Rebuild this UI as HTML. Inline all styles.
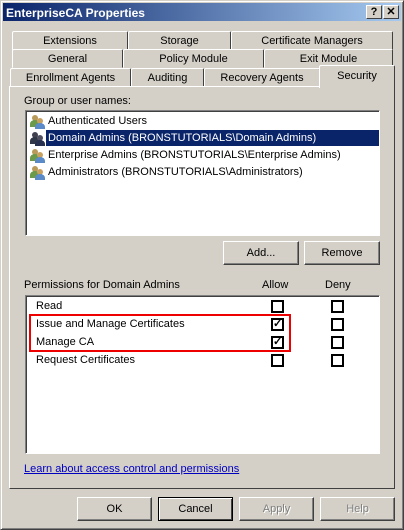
<!DOCTYPE html><html><head><style>
*{box-sizing:border-box}body{margin:0;width:404px;height:530px;background:#d4d0c8;font-family:Tahoma,"Liberation Sans",sans-serif;font-size:11px;color:#000;position:relative;overflow:hidden}
.a{position:absolute}
.win{left:0;top:0;width:404px;height:530px;border:1px solid #404040;border-top-color:#d4d0c8;border-left-color:#d4d0c8;box-shadow:inset 1px 1px #fff,inset -1px -1px #808080}
.title{left:3px;top:3px;width:398px;height:18px;background:linear-gradient(90deg,#0a246a,#a6caf0);color:#fff;font-weight:bold;font-size:12px;padding:3px 3px}
.tb{top:5px;width:16px;height:14px;background:#d4d0c8;border:1px solid;border-color:#fff #404040 #404040 #fff;font-weight:bold;font-size:11px;text-align:center;line-height:12px}
.tab{height:19px;border:1px solid;border-color:#fff #404040 transparent #fff;border-radius:2px 2px 0 0;text-align:center;line-height:19px;background:#d4d0c8}
.panel{left:9px;top:86px;width:386px;height:403px;border:1px solid;border-color:#fff #404040 #404040 #fff}
.box{background:#fff;border:1px solid;border-color:#808080 #fff #fff #808080;box-shadow:inset 1px 1px #404040}
.btn{height:24px;border:1px solid;border-color:#fff #404040 #404040 #fff;box-shadow:inset -1px -1px #808080;text-align:center;line-height:23px}
.cb{width:13px;height:13px;border:2px solid #000;background:#fff;font-size:11px;line-height:9px;text-align:center;font-weight:bold}
</style></head><body>
<div class="a win"></div>
<div class="a title">EnterpriseCA Properties</div>
<div class="a tb" style="left:366px">?</div><div class="a tb" style="left:383px">✕</div>
<div class="a tab" style="left:12px;top:31px;width:116px">Extensions</div>
<div class="a tab" style="left:128px;top:31px;width:103px">Storage</div>
<div class="a tab" style="left:231px;top:31px;width:162px">Certificate Managers</div>
<div class="a tab" style="left:12px;top:49px;width:111px">General</div>
<div class="a tab" style="left:123px;top:49px;width:141px">Policy Module</div>
<div class="a tab" style="left:264px;top:49px;width:129px">Exit Module</div>
<div class="a tab" style="left:10px;top:68px;width:121px">Enrollment Agents</div>
<div class="a tab" style="left:131px;top:68px;width:73px">Auditing</div>
<div class="a tab" style="left:204px;top:68px;width:116px">Recovery Agents</div>
<div class="a panel"></div>
<div class="a tab" style="left:319px;top:65px;width:76px;height:23px;border-bottom:none;line-height:20px;z-index:2">Security</div>
<div class="a" style="left:24px;top:95px">Group or user names:</div>
<div class="a box" style="left:25px;top:110px;width:355px;height:126px"></div>
<div class="a" style="left:46px;top:130px;width:333px;height:16px;background:#0a246a"></div>
<svg class="a" style="left:29px;top:114px" width="18" height="70">
<g id="u"><circle cx="6" cy="4" r="3" fill="#b89a5a"/><path d="M1 13v-3a5 4 0 0 1 10 0v3z" fill="#6a9a4a"/><circle cx="11" cy="7" r="3" fill="#c8a060"/><path d="M6 15v-2a5 4 0 0 1 10 0v2z" fill="#5a8ac8"/></g>
<g transform="translate(0,17)"><circle cx="6" cy="4" r="3" fill="#404050"/><path d="M1 13v-3a5 4 0 0 1 10 0v3z" fill="#303848"/><circle cx="11" cy="7" r="3" fill="#505060"/><path d="M6 15v-2a5 4 0 0 1 10 0v2z" fill="#283050"/></g>
<use href="#u" y="34"/><use href="#u" y="51"/></svg>
<div class="a" style="left:48px;top:115px">Authenticated Users</div>
<div class="a" style="left:48px;top:132px;color:#fff">Domain Admins (BRONSTUTORIALS\Domain Admins)</div>
<div class="a" style="left:48px;top:149px">Enterprise Admins (BRONSTUTORIALS\Enterprise Admins)</div>
<div class="a" style="left:48px;top:166px">Administrators (BRONSTUTORIALS\Administrators)</div>
<div class="a btn" style="left:223px;top:241px;width:76px">Add...</div>
<div class="a btn" style="left:304px;top:241px;width:76px">Remove</div>
<div class="a" style="left:24px;top:279px">Permissions for Domain Admins</div>
<div class="a" style="left:262px;top:279px">Allow</div>
<div class="a" style="left:325px;top:279px">Deny</div>
<div class="a box" style="left:25px;top:295px;width:355px;height:159px"></div>
<div class="a" style="left:36px;top:300px">Read</div>
<div class="a" style="left:36px;top:318px">Issue and Manage Certificates</div>
<div class="a" style="left:36px;top:336px">Manage CA</div>
<div class="a" style="left:36px;top:354px">Request Certificates</div>
<div class="a cb" style="left:271px;top:300px"></div><div class="a cb" style="left:331px;top:300px"></div>
<div class="a cb" style="left:271px;top:318px">✓</div><div class="a cb" style="left:331px;top:318px"></div>
<div class="a cb" style="left:271px;top:336px">✓</div><div class="a cb" style="left:331px;top:336px"></div>
<div class="a cb" style="left:271px;top:354px"></div><div class="a cb" style="left:331px;top:354px"></div>
<div class="a" style="left:29px;top:314px;width:262px;height:38px;border:2px solid #e00"></div>
<div class="a" style="left:24px;top:463px;color:#0000c0;text-decoration:underline">Learn about access control and permissions</div>
<div class="a btn" style="left:77px;top:497px;width:75px">OK</div>
<div class="a btn" style="left:158px;top:497px;width:75px;border:1px solid #000;box-shadow:inset 1px 1px #fff,inset -1px -1px #404040">Cancel</div>
<div class="a btn" style="left:239px;top:497px;width:75px;color:#808080;text-shadow:1px 1px #fff">Apply</div>
<div class="a btn" style="left:320px;top:497px;width:75px;color:#808080;text-shadow:1px 1px #fff">Help</div>
</body></html>
